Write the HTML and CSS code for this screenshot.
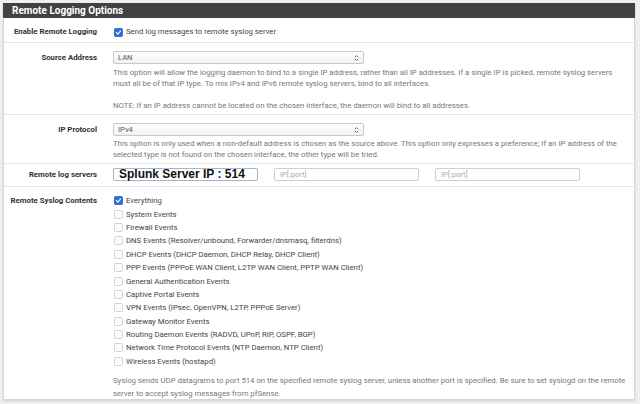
FILE: index.html
```html
<!DOCTYPE html>
<html>
<head>
<meta charset="utf-8">
<link rel="stylesheet" href="styles.css">
</head>
<body>
<div class="panel">
  <div class="panel-heading">Remote Logging Options</div>

  <div class="row row-enable">
    <div class="label">Enable Remote Logging</div>
    <div class="content">
      <label class="check"><span class="box checked"><svg viewBox="0 0 8 8" width="8" height="8"><path d="M1.6 4.2 L3.3 5.8 L6.4 2.2" fill="none" stroke="#fff" stroke-width="1.3" stroke-linecap="round" stroke-linejoin="round"/></svg></span>Send log messages to remote syslog server</label>
    </div>
  </div>

  <div class="row row-source">
    <div class="label label-select">Source Address</div>
    <div class="content">
      <div class="select"><span>LAN</span><svg class="arrows" viewBox="0 0 6 9" width="6" height="9"><path d="M1 3.5 L3 1.5 L5 3.5 M1 5.5 L3 7.5 L5 5.5" fill="none" stroke="#555" stroke-width="1"/></svg></div>
      <p class="help help-source">This option will allow the logging daemon to bind to a single IP address, rather than all IP addresses. If a single IP is picked, remote syslog servers must all be of that IP type. To mix IPv4 and IPv6 remote syslog servers, bind to all interfaces.<br><br>NOTE: If an IP address cannot be located on the chosen interface, the daemon will bind to all addresses.</p>
    </div>
  </div>

  <div class="row row-proto">
    <div class="label label-select">IP Protocol</div>
    <div class="content">
      <div class="select"><span>IPv4</span><svg class="arrows" viewBox="0 0 6 9" width="6" height="9"><path d="M1 3.5 L3 1.5 L5 3.5 M1 5.5 L3 7.5 L5 5.5" fill="none" stroke="#555" stroke-width="1"/></svg></div>
      <p class="help help-proto">This option is only used when a non-default address is chosen as the source above. This option only expresses a preference; If an IP address of the selected type is not found on the chosen interface, the other type will be tried.</p>
    </div>
  </div>

  <div class="row row-servers">
    <div class="label label-input">Remote log servers</div>
    <div class="content inputs">
      <div class="input input-value">Splunk Server IP : 514</div>
      <div class="input placeholder">IP[:port]</div>
      <div class="input placeholder">IP[:port]</div>
    </div>
  </div>

  <div class="row row-contents">
    <div class="label label-list">Remote Syslog Contents</div>
    <div class="content">
      <ul class="checklist">
        <li><span class="box checked"><svg viewBox="0 0 8 8" width="8" height="8"><path d="M1.6 4.2 L3.3 5.8 L6.4 2.2" fill="none" stroke="#fff" stroke-width="1.3" stroke-linecap="round" stroke-linejoin="round"/></svg></span>Everything</li>
        <li><span class="box"></span>System Events</li>
        <li><span class="box"></span>Firewall Events</li>
        <li><span class="box"></span>DNS Events (Resolver/unbound, Forwarder/dnsmasq, filterdns)</li>
        <li><span class="box"></span>DHCP Events (DHCP Daemon, DHCP Relay, DHCP Client)</li>
        <li><span class="box"></span>PPP Events (PPPoE WAN Client, L2TP WAN Client, PPTP WAN Client)</li>
        <li><span class="box"></span>General Authentication Events</li>
        <li><span class="box"></span>Captive Portal Events</li>
        <li><span class="box"></span>VPN Events (IPsec, OpenVPN, L2TP, PPPoE Server)</li>
        <li><span class="box"></span>Gateway Monitor Events</li>
        <li><span class="box"></span>Routing Daemon Events (RADVD, UPnP, RIP, OSPF, BGP)</li>
        <li><span class="box"></span>Network Time Protocol Events (NTP Daemon, NTP Client)</li>
        <li><span class="box"></span>Wireless Events (hostapd)</li>
      </ul>
      <p class="help help-bottom">Syslog sends UDP datagrams to port 514 on the specified remote syslog server, unless another port is specified. Be sure to set syslogd on the remote server to accept syslog messages from pfSense.</p>
    </div>
  </div>
</div>
</body>
</html>
```

FILE: styles.css
```css
html, body {
  margin: 0;
  padding: 0;
}
body {
  background: #efefef;
  font-family: Roboto, "Liberation Sans", sans-serif;
  font-size: 7.75px;
  color: #333;
  padding: 3px 5px 0 3px;
  height: 404px;
  box-sizing: border-box;
  overflow: hidden;
}
.panel {
  background: #fff;
  border: 1px solid #d8d8d8;
  border-top: 0;
  box-shadow: 0 1px 2px rgba(0,0,0,0.12);
  height: 397px;
  box-sizing: border-box;
}
.panel-heading {
  background: #424242;
  color: #fff;
  font-weight: bold;
  font-size: 10px;
  height: 15px;
  line-height: 15px;
  padding-left: 9px;
  margin: 0 -1px;
}
.row {
  display: grid;
  grid-template-columns: 93px 1fr;
  column-gap: 16px;
  border-bottom: 1px solid #e6e6e6;
  padding-right: 8px;
}
.label {
  text-align: right;
  font-weight: bold;
  color: #333;
  font-size: 7.8px;
}
.row-enable {
  padding-top: 9px;
  padding-bottom: 5px;
  line-height: 10px;
}
.check {
  display: flex;
  align-items: center;
  color: #444;
}
.box {
  display: inline-flex;
  align-items: center;
  justify-content: center;
  width: 7px;
  height: 7px;
  border: 1px solid #d4d4d4;
  border-radius: 1.5px;
  background: #fbfbfb;
  margin: 0 3px 0 1px;
  flex: none;
}
.box.checked {
  background: #2f6fd6;
  border-color: #2f6fd6;
}
.box svg {
  width: 7px;
  height: 7px;
}
.row-source {
  padding-top: 8px;
  padding-bottom: 3px;
}
.row-proto {
  padding-top: 8px;
  padding-bottom: 3px;
}
.label-select {
  line-height: 13px;
}
.select {
  width: 251px;
  height: 13px;
  box-sizing: border-box;
  border: 1px solid #c8c8c8;
  border-radius: 2px;
  background: linear-gradient(#ffffff, #f1f1f1);
  display: flex;
  align-items: center;
  justify-content: space-between;
  padding: 0 4px 0 4px;
  color: #555;
  font-size: 7.6px;
}
.arrows {
  width: 5px;
  height: 8px;
}
.help {
  margin: 3px 0 0;
  color: #777;
  line-height: 11px;
}
.help-proto {
  margin-top: 3px;
  line-height: 10.5px;
}
.row-servers {
  padding-top: 4px;
  padding-bottom: 5px;
}
.label-input {
  line-height: 13px;
}
.inputs {
  display: flex;
  gap: 16px;
}
.input {
  width: 145px;
  height: 13px;
  box-sizing: border-box;
  border: 1px solid #cfcfcf;
  border-radius: 2px;
  padding-left: 5px;
  line-height: 11px;
  color: #aaa;
  font-size: 7.6px;
}
.input-value {
  border-color: #9fb6d4;
  font-family: "Liberation Sans", Arial, sans-serif;
  font-weight: bold;
  font-size: 12px;
  line-height: 11px;
  color: #111;
  padding-left: 5px;
  text-shadow: 0 0 1px #fff, 0 0 1px #fff;
  white-space: nowrap;
  overflow: visible;
}
.row-contents {
  padding-top: 7px;
  border-bottom: 0;
}
.label-list {
  line-height: 13.4px;
}
.checklist {
  list-style: none;
  margin: 0;
  padding: 0;
}
.checklist li {
  display: flex;
  align-items: center;
  height: 13.4px;
  color: #444;
}
.help-bottom {
  margin-top: 6px;
  line-height: 13px;
}
```
